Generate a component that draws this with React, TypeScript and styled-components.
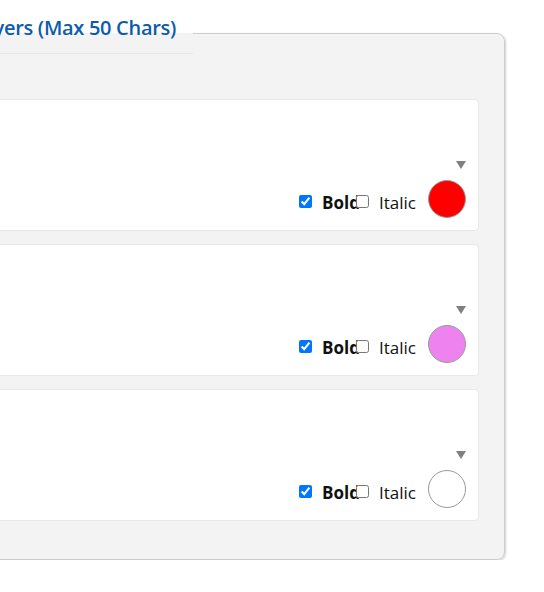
import React from 'react'
import styled, { createGlobalStyle } from 'styled-components'

const GlobalStyle = createGlobalStyle`
  html, body {
    margin: 0;
    padding: 0;
    background: #ffffff;
    font-family: "Open Sans", "Liberation Sans", sans-serif;
    overflow: hidden;
  }
`

interface Layer {
  id: string;
  bold: boolean;
  italic: boolean;
  color: string;
}

const layers: Layer[] = [
  { id: 'l1', bold: true, italic: false, color: '#ff0000' },
  { id: 'l2', bold: true, italic: false, color: '#ee82ee' },
  { id: 'l3', bold: true, italic: false, color: '#ffffff' },
]

function LayerCard({ bold, italic, color }: Layer) {
  return (
    <Card>
      <Caret />
      <Controls>
        <Check type="checkbox" defaultChecked={bold} />
        <BoldLabel>Bold</BoldLabel>
        <Check type="checkbox" defaultChecked={italic} />
        <ItalicLabel>Italic</ItalicLabel>
        <Swatch $color={color} />
      </Controls>
    </Card>
  )
}

export default function App() {
  return (
    <>
      <GlobalStyle />
      <Panel>
        <Legend>
          <LegendText>Text Layers (Max 50 Chars)</LegendText>
        </Legend>
        <CardList>
          {layers.map((l) => (
            <LayerCard key={l.id} {...l} />
          ))}
        </CardList>
      </Panel>
    </>
  )
}

const Panel = styled.fieldset`
  margin: 12px 39px 0 -300px;
  padding: 45px 25px 38px 24px;
  border: 1px solid #cdcdcd;
  border-radius: 8px;
  background: #f3f3f3;
  box-shadow: 1px 1px 2px rgba(0, 0, 0, 0.18);
  min-inline-size: 0;
`

const Legend = styled.legend`
  box-sizing: border-box;
  width: 468px;
  padding: 1px 0 10px 0;
  border-bottom: 1px solid #e6e6e6;
  text-align: left;
`

const LegendText = styled.span`
  display: block;
  padding-right: 17px;
  text-align: right;
  font-size: 20px;
  line-height: 30px;
  font-weight: 600;
  letter-spacing: -0.3px;
  color: #0b5cad;
  white-space: nowrap;
`

const CardList = styled.div`
  display: flex;
  flex-direction: column;
  gap: 13px;
`

const Card = styled.div`
  box-sizing: border-box;
  height: 132px;
  padding: 0 12px 12px;
  background: #ffffff;
  border: 1px solid #e8e8e8;
  border-radius: 4px;
  display: flex;
  flex-direction: column;
  align-items: flex-end;
  justify-content: flex-end;
`

const Caret = styled.span`
  width: 0;
  height: 0;
  border-left: 5.5px solid transparent;
  border-right: 5.5px solid transparent;
  border-top: 8px solid #808080;
  margin-bottom: 11px;
`

const Controls = styled.div`
  display: flex;
  align-items: center;
  height: 38px;
  font-size: 17px;
  color: #111111;
`

const Check = styled.input`
  width: 13px;
  height: 13px;
  margin: 5px 0 0 0;
`

const BoldLabel = styled.span`
  width: 34px;
  margin: 6px 0 0 10px;
  font-weight: 700;
  white-space: nowrap;
`

const ItalicLabel = styled.span`
  margin: 6px 12px 0 10px;
  white-space: nowrap;
`

const Swatch = styled.span<{ $color: string }>`
  box-sizing: border-box;
  width: 38px;
  height: 38px;
  border-radius: 50%;
  border: 1px solid #9a9a9a;
  background: ${(p) => p.$color};
`
